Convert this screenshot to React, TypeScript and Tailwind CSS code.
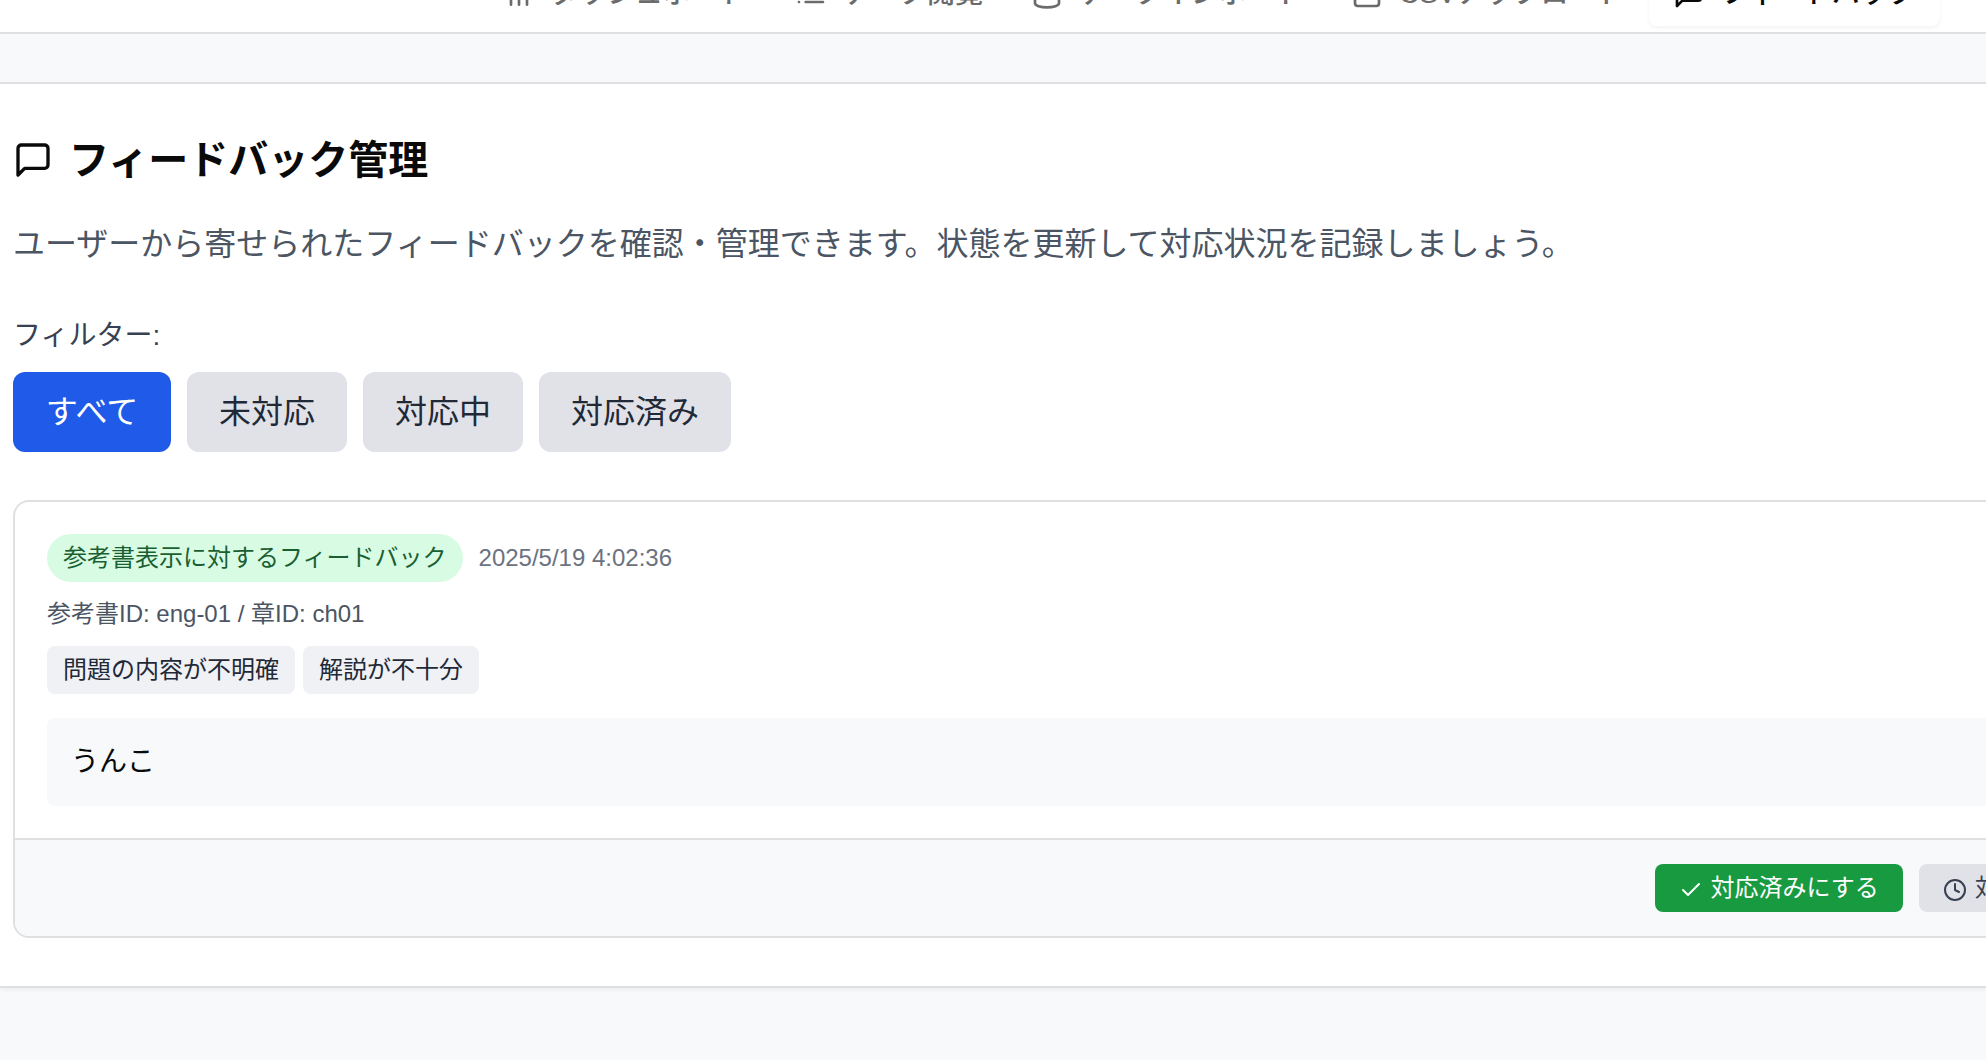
import type { ReactNode } from "react";
import { Check, Clock, Database, Upload } from "lucide-react";

function LineIcon({ d, className }: { d: string; className: string }) {
  return (
    <svg
      className={className}
      viewBox="0 0 24 24"
      fill="none"
      stroke="currentColor"
      strokeWidth="2"
      strokeLinecap="round"
      strokeLinejoin="round"
      aria-hidden="true"
    >
      <path d={d} />
    </svg>
  );
}

const messagePath = "M21 15a2 2 0 0 1-2 2H7l-4 4V5a2 2 0 0 1 2-2h14a2 2 0 0 1 2 2z";
const barsPath = "M12 20V10M18 20V4M6 20v-4";
const listPath = "M8 6h13M8 12h13M8 18h13M3 6h.01M3 12h.01M3 18h.01";

const tabs: { label: string; icon: ReactNode; active?: boolean }[] = [
  { label: "ダッシュボード", icon: <LineIcon d={barsPath} className="size-8" /> },
  { label: "データ閲覧", icon: <LineIcon d={listPath} className="size-8" /> },
  { label: "データインポート", icon: <Database className="size-8" /> },
  { label: "CSVアップロード", icon: <Upload className="size-8" /> },
  { label: "フィードバック", icon: <LineIcon d={messagePath} className="size-8" />, active: true },
];

const filters = ["すべて", "未対応", "対応中", "対応済み"];
const reasons = ["問題の内容が不明確", "解説が不十分"];

function Header() {
  return (
    <header className="flex h-[34px] items-end justify-end border-b-2 border-[#e0e0e2] bg-white pr-[46px] pb-1.5">
      <nav className="flex shrink-0 whitespace-nowrap">
        {tabs.map((tab) => (
          <button
            key={tab.label}
            type="button"
            className={
              tab.active
                ? "flex items-center gap-4 rounded-lg bg-white px-6 py-3 text-[28px] leading-10 font-medium text-[#0a0a0a] shadow-[0_2px_4px_rgba(0,0,0,0.05)]"
                : "flex items-center gap-4 rounded-lg px-6 py-3 text-[28px] leading-10 font-medium text-[#6b6b6b]"
            }
          >
            {tab.icon}
            {tab.label}
          </button>
        ))}
      </nav>
    </header>
  );
}

function FeedbackItem() {
  return (
    <article className="-mr-[183px] overflow-hidden rounded-2xl border-2 border-[#e0e0e2]">
      <div className="p-8">
        <div className="flex items-center gap-4 text-2xl">
          <span className="rounded-full bg-[#d8fbe4] px-4 py-2 text-[#1a5f32]">参考書表示に対するフィードバック</span>
          <time className="text-[#6b7280]">2025/5/19 4:02:36</time>
        </div>
        <p className="mt-4 text-2xl text-[#4b5563]">参考書ID: eng-01 / 章ID: ch01</p>
        <ul className="mt-4 flex gap-2">
          {reasons.map((reason) => (
            <li key={reason} className="rounded-lg bg-[#f0f1f5] px-4 py-2 text-2xl text-[#1f2937]">
              {reason}
            </li>
          ))}
        </ul>
        <p className="mt-6 rounded-lg bg-[#f8f9fb] p-6 text-[28px] leading-10">うんこ</p>
      </div>
      <footer className="flex justify-end gap-4 border-t-2 border-[#e0e0e2] bg-[#f8f9fb] p-6">
        <button type="button" className="rounded-lg bg-[#189a41] px-6 py-2 text-2xl text-white">
          <Check className="mr-2 inline size-6 align-middle" />
          対応済みにする
        </button>
        <button type="button" className="rounded-lg bg-[#e1e2e8] px-6 py-2 text-2xl text-[#374151]">
          <Clock className="mr-2 inline size-6 align-middle" />
          対応中にする
        </button>
      </footer>
    </article>
  );
}

export default function App() {
  return (
    <div className="min-h-screen overflow-hidden bg-[#f8f9fb] font-['Liberation_Sans','Noto_Sans_CJK_JP',sans-serif] text-[#0a0a0a]">
      <Header />
      <main className="pt-12">
        <section className="border-y-2 border-[#e0e0e2] bg-white py-12 pl-[13px] shadow-[0_2px_4px_rgba(0,0,0,0.05)]">
          <h1 className="flex items-center gap-4 text-[40px] leading-14 font-bold">
            <LineIcon d={messagePath} className="size-10" />
            フィードバック管理
          </h1>
          <p className="mt-8 text-[32px] leading-12 text-[#4b5563]">
            ユーザーから寄せられたフィードバックを確認・管理できます。状態を更新して対応状況を記録しましょう。
          </p>
          <div className="mt-12" role="group" aria-labelledby="filter-label">
            <p id="filter-label" className="text-[28px] leading-10 text-[#374151]">
              フィルター:
            </p>
            <div className="mt-4 flex gap-4">
              {filters.map((filter, index) => (
                <button
                  key={filter}
                  type="button"
                  aria-pressed={index === 0}
                  className={
                    index === 0
                      ? "min-w-[158px] rounded-xl bg-[#205ae8] px-8 py-4 text-[32px] leading-12 text-white"
                      : "min-w-[158px] rounded-xl bg-[#e1e2e8] px-8 py-4 text-[32px] leading-12 text-[#1f2937]"
                  }
                >
                  {filter}
                </button>
              ))}
            </div>
          </div>
          <div className="mt-12">
            <FeedbackItem />
          </div>
        </section>
      </main>
    </div>
  );
}
